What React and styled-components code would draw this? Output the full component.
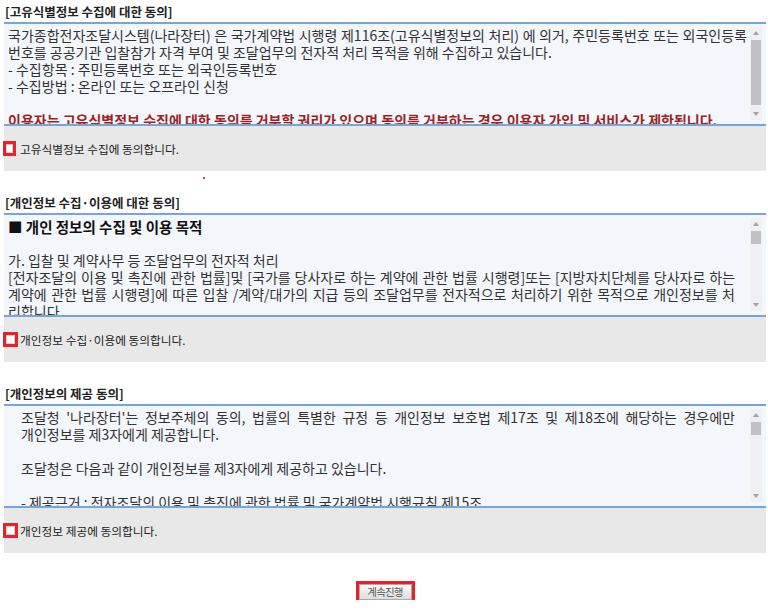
import React from 'react';
import styled, { createGlobalStyle } from 'styled-components';

const GlobalStyle = createGlobalStyle`
  body {
    margin: 0;
    background: #fff;
    font-family: "Noto Sans CJK KR", sans-serif;
  }
`;

const Page = styled.div`
  padding: 2px 2px 0 4px;
`;

const Title = styled.div`
  height: 20px;
  line-height: 20px;
  padding-left: 1px;
  font-size: 12.5px;
  font-weight: bold;
  color: #222;
`;

const Box = styled.div`
  display: flex;
  height: 100px;
  background: #f3f6fb;
  border-top: 2px solid #72a6dc;
  border-bottom: 2px solid #72a6dc;
`;

const Text = styled.div`
  flex: 1;
  min-width: 0;
  overflow: hidden;
  padding: 3px ${p => p.$pr}px 0 ${p => p.$pl}px;
  font-size: 14px;
  line-height: 17px;
  color: #333;
`;

// one visual line of the agreement text; justified lines are stretched to the edge
const Line = styled.div`
  height: 17px;
  white-space: nowrap;
  text-align: ${p => (p.$justify ? 'justify' : 'left')};
  text-align-last: ${p => (p.$justify ? 'justify' : 'auto')};
`;

const Warn = styled.span`
  color: #a01f24;
  font-weight: bold;
`;

const Heading = styled.span`
  font-size: 14.5px;
  font-weight: bold;
  color: #111;
`;

const ScrollCol = styled.div`
  width: 12px;
  margin: 3px 4px 4px 0;
  display: flex;
  flex-direction: column;
  background: #f0f0f0;
`;

const Arrow = styled.div`
  height: 12px;
  display: flex;
  align-items: center;
  justify-content: center;
`;

const Track = styled.div`
  flex: 1;
  padding: 0 1px;
`;

const Thumb = styled.div`
  margin-top: ${p => p.$top}px;
  height: ${p => p.$h}px;
  background: #c1c1c1;
`;

const Agree = styled.div`
  height: 45px;
  display: flex;
  align-items: center;
  background: #e8e8e8;
  font-size: 11.7px;
  color: #222;
`;

const Check = styled.input`
  appearance: none;
  box-sizing: border-box;
  margin: 0 ${p => p.$gap}px 0 -1px;
  width: ${p => p.$w}px;
  height: 15px;
  border: 3px solid #e8212b;
  background: #fff;
  box-shadow: inset 0 0 0 1px #d4d4d4;
`;

const Gap = styled.div`
  display: flow-root;
  height: 22px;
`;

const Dot = styled.div`
  width: 2px;
  height: 2px;
  margin: 6px 0 0 199px;
  background: #f23a3a;
`;

const ButtonRow = styled.div`
  display: flex;
  justify-content: center;
  padding-top: 31px;
`;

const Button = styled.button`
  width: 53px;
  height: 16px;
  padding: 0;
  border: 1px solid #a9a9a9;
  outline: 3px solid #e8212b;
  background: linear-gradient(#fdfdfd, #dcdcdc);
  font-family: "Noto Sans CJK KR", sans-serif;
  font-size: 10.5px;
  letter-spacing: -0.8px;
  line-height: 14px;
  color: #555;
`;

const Tri = ({ down }) => (
  <svg width="6" height="4" viewBox="0 0 6 4">
    <path d={down ? 'M0 0 H6 L3 4 Z' : 'M0 4 H6 L3 0 Z'} fill="#a3a3a3" />
  </svg>
);

const Scrollbar = ({ top, h }) => (
  <ScrollCol>
    <Arrow><Tri /></Arrow>
    <Track><Thumb $top={top} $h={h} /></Track>
    <Arrow><Tri down /></Arrow>
  </ScrollCol>
);

const Section = ({ title, label, pl, pr, thumb, narrow, children }) => (
  <div>
    <Title>{title}</Title>
    <Box>
      <Text $pl={pl} $pr={pr}>{children}</Text>
      <Scrollbar top={thumb.top} h={thumb.h} />
    </Box>
    <Agree>
      <Check type="checkbox" $w={narrow ? 13 : 15} $gap={narrow ? 4 : 2} />
      {label}
    </Agree>
  </div>
);

export default function App() {
  return (
    <Page>
      <GlobalStyle />
      <Section
        title="[고유식별정보 수집에 대한 동의]"
        label="고유식별정보 수집에 동의합니다."
        pl={4}
        pr={3}
        thumb={{ top: 1, h: 65 }}
        narrow
      >
        <Line $justify>국가종합전자조달시스템(나라장터) 은 국가계약법 시행령 제116조(고유식별정보의 처리) 에 의거, 주민등록번호 또는 외국인등록</Line>
        <Line>번호를 공공기관 입찰참가 자격 부여 및 조달업무의 전자적 처리 목적을 위해 수집하고 있습니다.</Line>
        <Line>- 수집항목 : 주민등록번호 또는 외국인등록번호</Line>
        <Line>- 수집방법 : 온라인 또는 오프라인 신청</Line>
        <Line />
        <Line><Warn>이용자는 고유식별정보 수집에 대한 동의를 거부할 권리가 있으며 동의를 거부하는 경우 이용자 가입 및 서비스가 제한됩니다.</Warn></Line>
      </Section>
      <Gap><Dot /></Gap>
      <Section
        title="[개인정보 수집·이용에 대한 동의]"
        label="개인정보 수집·이용에 동의합니다."
        pl={4}
        pr={15}
        thumb={{ top: 1, h: 13 }}
      >
        <Line><Heading>■ 개인 정보의 수집 및 이용 목적</Heading></Line>
        <Line />
        <Line>가. 입찰 및 계약사무 등 조달업무의 전자적 처리</Line>
        <Line $justify>[전자조달의 이용 및 촉진에 관한 법률]및 [국가를 당사자로 하는 계약에 관한 법률 시행령]또는 [지방자치단체를 당사자로 하는</Line>
        <Line $justify>계약에 관한 법률 시행령]에 따른 입찰 /계약/대가의 지급 등의 조달업무를 전자적으로 처리하기 위한 목적으로 개인정보를 처</Line>
        <Line>리합니다.</Line>
      </Section>
      <Gap />
      <Section
        title="[개인정보의 제공 동의]"
        label="개인정보 제공에 동의합니다."
        pl={17}
        pr={15}
        thumb={{ top: 1, h: 13 }}
      >
        <Line $justify>조달청 '나라장터'는 정보주체의 동의, 법률의 특별한 규정 등 개인정보 보호법 제17조 및 제18조에 해당하는 경우에만</Line>
        <Line>개인정보를 제3자에게 제공합니다.</Line>
        <Line />
        <Line>조달청은 다음과 같이 개인정보를 제3자에게 제공하고 있습니다.</Line>
        <Line />
        <Line>- 제공근거 : 전자조달의 이용 및 촉진에 관한 법률 및 국가계약법 시행규칙 제15조</Line>
      </Section>
      <ButtonRow>
        <Button type="button">계속진행</Button>
      </ButtonRow>
    </Page>
  );
}
